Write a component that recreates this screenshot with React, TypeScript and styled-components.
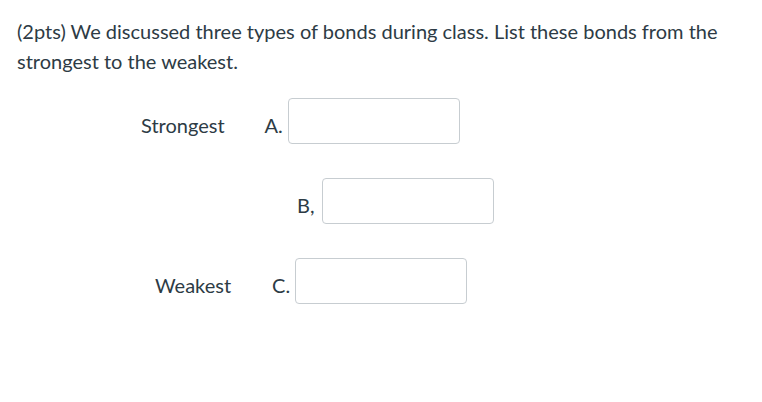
import React from "react";
import styled, { createGlobalStyle } from "styled-components";

const GlobalStyle = createGlobalStyle`
  html, body {
    margin: 0;
    padding: 0;
    background: #ffffff;
  }
  body {
    font-family: Lato, "Helvetica Neue", Arial, sans-serif;
    color: #2d3b45;
  }
`;

const Page = styled.div`
  width: 762px;
  height: 402px;
  box-sizing: border-box;
  padding: 16px 17px 0;
`;

const Question = styled.p`
  margin: 0;
  font-size: 20px;
  line-height: 30px;
  max-width: 720px;
`;

const Answers = styled.div`
  display: flex;
  flex-direction: column;
  gap: 34px;
  margin-top: 22px;
`;

const Row = styled.div<{ $indent: number }>`
  display: flex;
  align-items: flex-end;
  padding-left: ${(p) => p.$indent}px;
  font-size: 20px;
  line-height: 30px;
`;

const RankLabel = styled.span<{ $gap: number }>`
  margin: 0 ${(p) => p.$gap}px 4px 0;
`;

const Letter = styled.span<{ $gap: number }>`
  margin: 0 ${(p) => p.$gap}px 4px 0;
`;

const Blank = styled.input`
  width: 172px;
  height: 46px;
  box-sizing: border-box;
  border: 1px solid #c7cdd1;
  border-radius: 4px;
  background: #fff;
  padding: 0 8px;
  font: inherit;
  outline: none;
`;

const rows = [
  { indent: 124, rank: "Strongest", gap: 40, letter: "A.", after: 5 },
  { indent: 280, rank: "", gap: 0, letter: "B,", after: 8 },
  { indent: 138, rank: "Weakest", gap: 41, letter: "C.", after: 5 },
];

export default function App() {
  return (
    <Page>
      <GlobalStyle />
      <Question>
        (2pts) We discussed three types of bonds during class. List these bonds
        from the strongest to the weakest.
      </Question>
      <Answers>
        {rows.map((r) => (
          <Row key={r.letter} $indent={r.indent}>
            {r.rank && <RankLabel $gap={r.gap}>{r.rank}</RankLabel>}
            <Letter $gap={r.after}>{r.letter}</Letter>
            <Blank type="text" />
          </Row>
        ))}
      </Answers>
    </Page>
  );
}
